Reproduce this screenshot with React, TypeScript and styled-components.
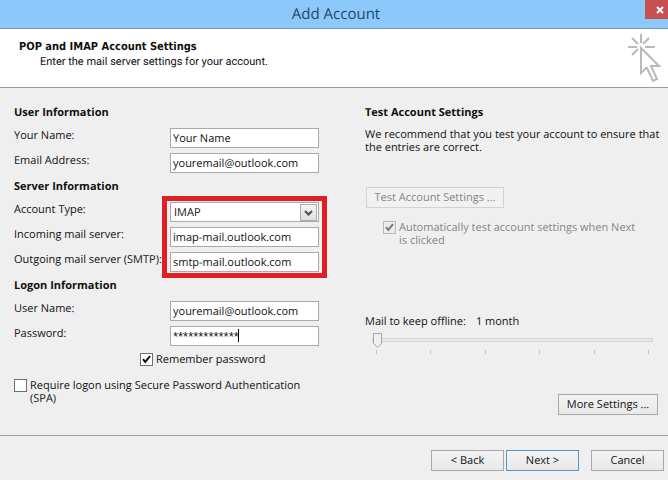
import React, { useState } from "react";
import styled, { createGlobalStyle } from "styled-components";

const GlobalStyle = createGlobalStyle`
  *, *::before, *::after { box-sizing: border-box; }
  html, body { margin: 0; padding: 0; }
  body, button, input, select {
    font-family: "Open Sans", "Noto Sans", sans-serif;
    font-size: 11px;
    line-height: 13px;
    color: #111;
    text-rendering: geometricPrecision;
  }
`;

const Dialog = styled.main`
  display: flex;
  flex-direction: column;
  min-height: 100vh;
  background: #efeff0;
`;

const TitleBar = styled.header`
  display: grid;
  grid-template-columns: 1fr auto 1fr;
  height: 29px;
  background: #8dc8fa;
  border-bottom: 1px solid #7698b8;
`;

const Title = styled.h1`
  grid-column: 2;
  margin: 0;
  padding: 0 0 0 4px;
  font-size: 15px;
  font-weight: 400;
  line-height: 28px;
  color: #1d456c;
`;

const CloseButton = styled.button`
  justify-self: end;
  display: flex;
  align-items: center;
  justify-content: center;
  width: 23px;
  height: 19px;
  padding: 0 0 0 7px;
  border: 0;
  background: #c84f50;
`;

const Banner = styled.section`
  display: flex;
  justify-content: space-between;
  height: 59px;
  padding: 4px 7px 0 19px;
  background: #fff;
  border-bottom: 1px solid #999a9c;
`;

const BannerTitle = styled.h2`
  margin: 7px 0 2px;
  font-family: "DejaVu Sans Condensed", "DejaVu Sans", sans-serif;
  font-size: 11px;
  line-height: 13px;
`;

const BannerText = styled.p`
  margin: 0 0 0 21px;
  font-family: Roboto, "Noto Sans", sans-serif;
`;

const Content = styled.form`
  flex: 1;
  display: grid;
  grid-template-columns: minmax(305px, 1fr) 300px;
  column-gap: 20px;
  padding: 18px 3px 17px 14px;
`;

const Column = styled.div`
  display: flex;
  flex-direction: column;
`;

const Heading = styled.h3`
  margin: 0;
  font-size: 11px;
  line-height: 13px;
  font-weight: 700;
`;

const Group = styled.div`
  display: grid;
  grid-template-columns: 156px 149px;
  margin: 9px 0 7px;
`;

const Labels = styled.div`
  display: flex;
  flex-direction: column;
  gap: 5px;
`;

const Label = styled.label`
  height: 20px;
  line-height: 15px;
  white-space: nowrap;
`;

const Fields = styled.div<{ $marked?: boolean }>`
  position: relative;
  display: flex;
  flex-direction: column;
  gap: 5px;
  &::after {
    content: "";
    display: ${(p) => (p.$marked ? "block" : "none")};
    position: absolute;
    inset: -6px -8px;
    border: 5px solid #dd1f26;
    pointer-events: none;
  }
`;

const FieldBox = styled.div`
  position: relative;
  display: flex;
`;

const TextInput = styled.input`
  width: 100%;
  height: 20px;
  padding: 0 2px;
  border: 1px solid #a9a9ab;
  border-radius: 0;
  background: #fff;
  outline: none;
`;

const MaskedInput = styled(TextInput)`
  font-family: "Liberation Sans", Arial, sans-serif;
  font-size: 13px;
`;

const Caret = styled.span`
  position: absolute;
  left: 68px;
  top: 3px;
  width: 1px;
  height: 13px;
  background: #000;
`;

const Select = styled.select`
  appearance: none;
  width: 100%;
  height: 20px;
  padding: 0 20px 0 3px;
  border: 1px solid #a9a9ab;
  border-radius: 0;
  background: #fff;
  outline: none;
`;

const SelectArrow = styled.span`
  position: absolute;
  top: 2px;
  right: 2px;
  display: flex;
  align-items: center;
  justify-content: center;
  width: 17px;
  height: 17px;
  border: 1px solid #adadad;
  background: linear-gradient(#f4f4f4, #dfdfdf);
  pointer-events: none;
`;

const LogonChecks = styled.div`
  display: flex;
  flex-direction: column;
  gap: 13px;
`;

const CheckRow = styled.label<{ $indent?: number; $dim?: boolean }>`
  display: flex;
  align-items: flex-start;
  gap: 3px;
  margin-left: ${(p) => p.$indent ?? 0}px;
  max-width: ${(p) => (p.$dim ? 258 : 310)}px;
  color: ${(p) => (p.$dim ? "#858587" : "#111")};
`;

const CheckBoxWrap = styled.span`
  position: relative;
  display: flex;
  flex: none;
`;

const CheckInput = styled.input`
  appearance: none;
  width: 13px;
  height: 13px;
  margin: 0;
  border: 1px solid #707070;
  background: #fff;
  &:disabled {
    border-color: #b9b9b9;
    background: #ececec;
  }
  & + svg { display: none; }
  &:checked + svg { display: block; }
`;

const CheckMark = styled.svg`
  position: absolute;
  inset: 0;
  pointer-events: none;
`;

const Paragraph = styled.p`
  margin: 9px 0 33px;
`;

const Button = styled.button<{ $wide?: number; $primary?: boolean }>`
  width: ${(p) => p.$wide ?? 73}px;
  height: 21px;
  padding: 0;
  border: 1px solid ${(p) => (p.$primary ? "#5595c8" : "#a9a9ab")};
  background: linear-gradient(#f3f3f4, #e8e8e9);
  &:disabled {
    border-color: #d2d2d4;
    background: #f1f1f2;
    color: #858587;
  }
`;

const TestActions = styled.div`
  display: flex;
  flex-direction: column;
  align-items: flex-start;
  gap: 13px;
  padding-left: 1px;
`;

const OfflineRow = styled.div`
  display: flex;
  gap: 10px;
  margin-top: 68px;
`;

const SliderBox = styled.div`
  display: flex;
  flex-direction: column;
  gap: 3px;
  width: 281px;
  margin: 4px 0 0 7px;
`;

const thumb =
  "url(\"data:image/svg+xml,%3Csvg xmlns='http://www.w3.org/2000/svg' width='9' height='15'%3E%3Cpath d='M.5.5h8v10l-4 4-4-4z' fill='%23f0f0f0' stroke='%23a5a5a7'/%3E%3C/svg%3E\")";

const Slider = styled.input`
  appearance: none;
  width: 100%;
  height: 15px;
  margin: 0;
  background: transparent;
  &::-webkit-slider-runnable-track {
    height: 4px;
    border: 1px solid #d3d3d5;
    background: #e8e8e9;
  }
  &::-webkit-slider-thumb {
    appearance: none;
    width: 9px;
    height: 15px;
    margin-top: -6px;
    border: 0;
    background: ${thumb} no-repeat;
  }
`;

const Ticks = styled.div`
  display: flex;
  justify-content: space-between;
  padding: 0 4px;
`;

const Tick = styled.span`
  width: 1px;
  height: 4px;
  background: #c4c4c6;
`;

const MoreRow = styled.div`
  display: flex;
  justify-content: flex-end;
  margin-top: 40px;
  padding-right: 7px;
`;

const Footer = styled.footer`
  display: flex;
  justify-content: flex-end;
  height: 45px;
  padding: 14px 4px 0 0;
  border-top: 1px solid #a0a0a2;
`;

const NavButtons = styled.div`
  display: flex;
  gap: 2px;
  margin-right: 12px;
`;

function Check({ dim }: { dim?: boolean }) {
  return (
    <CheckMark width="13" height="13" viewBox="0 0 13 13" aria-hidden="true">
      <path d="M3 6.2 5.3 9 10 3.2" fill="none" stroke={dim ? "#777" : "#111"} strokeWidth="2" />
    </CheckMark>
  );
}

function ClickPointer() {
  return (
    <svg width="34" height="51" viewBox="0 0 34 51" fill="none" stroke="#b9b9b9" strokeWidth="2" aria-hidden="true">
      <path d="M14 1v9M1 14h9M18 14h10M5 5l6 6M22 5l-6 6M5 22l6-6" />
      <path d="M14 15v25l5-5h1l6 13 4-2-6-13h8z" />
    </svg>
  );
}

export default function App() {
  const [remember, setRemember] = useState(true);
  const [spa, setSpa] = useState(false);
  return (
    <>
      <GlobalStyle />
      <Dialog>
        <TitleBar>
          <Title>Add Account</Title>
          <CloseButton type="button" aria-label="Close">
            <svg width="8" height="8" viewBox="0 0 8 8" stroke="#fff" strokeWidth="2" aria-hidden="true">
              <path d="M1 1l6 6M7 1L1 7" />
            </svg>
          </CloseButton>
        </TitleBar>
        <Banner>
          <div>
            <BannerTitle>POP and IMAP Account Settings</BannerTitle>
            <BannerText>Enter the mail server settings for your account.</BannerText>
          </div>
          <ClickPointer />
        </Banner>
        <Content id="account">
          <Column>
            <Heading>User Information</Heading>
            <Group>
              <Labels>
                <Label htmlFor="name">Your Name:</Label>
                <Label htmlFor="email">Email Address:</Label>
              </Labels>
              <Fields>
                <TextInput id="name" defaultValue="Your Name" />
                <TextInput id="email" defaultValue="youremail@outlook.com" />
              </Fields>
            </Group>
            <Heading>Server Information</Heading>
            <Group>
              <Labels>
                <Label htmlFor="type">Account Type:</Label>
                <Label htmlFor="incoming">Incoming mail server:</Label>
                <Label htmlFor="outgoing">Outgoing mail server (SMTP):</Label>
              </Labels>
              <Fields $marked>
                <FieldBox>
                  <Select id="type" defaultValue="IMAP">
                    <option>IMAP</option>
                    <option>POP3</option>
                  </Select>
                  <SelectArrow>
                    <svg width="9" height="8" viewBox="0 0 9 8" fill="none" stroke="#505050" strokeWidth="2" aria-hidden="true">
                      <path d="M1 2l3.500 3.500L8 2" />
                    </svg>
                  </SelectArrow>
                </FieldBox>
                <TextInput id="incoming" defaultValue="imap-mail.outlook.com" />
                <TextInput id="outgoing" defaultValue="smtp-mail.outlook.com" />
              </Fields>
            </Group>
            <Heading>Logon Information</Heading>
            <Group>
              <Labels>
                <Label htmlFor="user">User Name:</Label>
                <Label htmlFor="password">Password:</Label>
              </Labels>
              <Fields>
                <TextInput id="user" defaultValue="youremail@outlook.com" />
                <FieldBox>
                  <MaskedInput id="password" defaultValue="*************" />
                  <Caret />
                </FieldBox>
              </Fields>
            </Group>
            <LogonChecks>
              <CheckRow $indent={126}>
                <CheckBoxWrap>
                  <CheckInput type="checkbox" checked={remember} onChange={() => setRemember(!remember)} />
                  <Check />
                </CheckBoxWrap>
                Remember password
              </CheckRow>
              <CheckRow>
                <CheckBoxWrap>
                  <CheckInput type="checkbox" checked={spa} onChange={() => setSpa(!spa)} />
                  <Check />
                </CheckBoxWrap>
                Require logon using Secure Password Authentication (SPA)
              </CheckRow>
            </LogonChecks>
          </Column>
          <Column>
            <Heading>Test Account Settings</Heading>
            <Paragraph>We recommend that you test your account to ensure that the entries are correct.</Paragraph>
            <TestActions>
              <Button type="button" disabled $wide={138}>Test Account Settings ...</Button>
              <CheckRow $indent={17} $dim>
                <CheckBoxWrap>
                  <CheckInput type="checkbox" checked disabled readOnly />
                  <Check dim />
                </CheckBoxWrap>
                Automatically test account settings when Next is clicked
              </CheckRow>
            </TestActions>
            <OfflineRow>
              <label htmlFor="offline">Mail to keep offline:</label>
              <output htmlFor="offline">1 month</output>
            </OfflineRow>
            <SliderBox>
              <Slider id="offline" type="range" min="0" max="5" defaultValue="0" />
              <Ticks>
                {[0, 1, 2, 3, 4, 5].map((n) => (
                  <Tick key={n} />
                ))}
              </Ticks>
            </SliderBox>
            <MoreRow>
              <Button type="button" $wide={100}>More Settings ...</Button>
            </MoreRow>
          </Column>
        </Content>
        <Footer>
          <NavButtons>
            <Button type="button">&lt; Back</Button>
            <Button type="submit" form="account" $primary>Next &gt;</Button>
          </NavButtons>
          <Button type="button">Cancel</Button>
        </Footer>
      </Dialog>
    </>
  );
}
